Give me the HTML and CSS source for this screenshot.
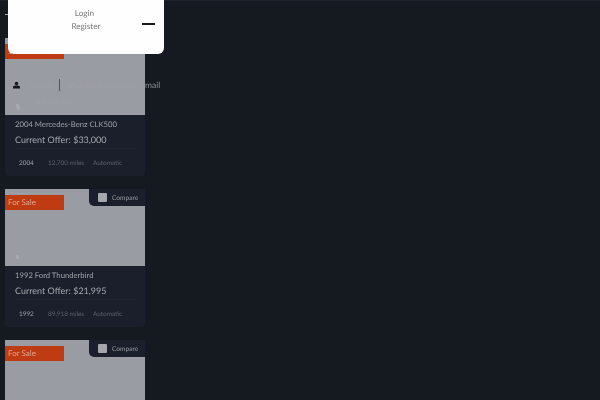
FILE: index.html
```html
<!DOCTYPE html>
<html lang="en">
<head>
<meta charset="utf-8">
<title>Listings</title>
<link rel="stylesheet" href="styles.css">
</head>
<body>
<div class="page">
  <header class="topbar"><span class="dash"></span></header>
  <main class="list">
    <article class="card">
      <div class="photo">
        <span class="badge">Sale Or...</span>
        <span class="photo-dot"></span>
      </div>
      <div class="info">
        <h2 class="title">2004 Mercedes-Benz CLK500</h2>
        <p class="price">Current Offer: $33,000</p>
        <ul class="specs"><li class="year">2004</li><li class="miles">12,700 miles</li><li class="trans">Automatic</li></ul>
      </div>
    </article>
    <article class="card">
      <div class="photo">
        <span class="badge">For Sale</span>
        <label class="compare"><span class="check"></span>Compare</label>
        <span class="photo-dot"></span>
      </div>
      <div class="info">
        <h2 class="title">1992 Ford Thunderbird</h2>
        <p class="price">Current Offer: $21,995</p>
        <ul class="specs"><li class="year">1992</li><li class="miles">89,918 miles</li><li class="trans">Automatic</li></ul>
      </div>
    </article>
    <article class="card">
      <div class="photo">
        <span class="badge">For Sale</span>
        <label class="compare"><span class="check"></span>Compare</label>
      </div>
    </article>
  </main>
  <div class="contact">
    <svg class="user" viewBox="0 0 10 10" width="7" height="8" aria-hidden="true"><circle cx="5" cy="2.7" r="2.5"/><path d="M0 10V8.2C0 6.6 1.4 5.6 3 5.6h4c1.6 0 3 1 3 2.6V10z"/></svg>
    <span class="contact-faint name">Call Us</span>
    <span class="sep"></span>
    <span class="contact-faint addr">info@dealership.com</span>
    <span class="contact-mail">mail</span>
  </div>
  <div class="contact-sub"><span class="sub-dot"></span><span>Our Location</span></div>
  <nav class="menu">
    <a class="menu-link login">Login</a>
    <a class="menu-link">Register</a>
    <span class="close"></span>
  </nav>
</div>
</body>
</html>
```
FILE: styles.css
```css
* { box-sizing: border-box; }
html, body { margin: 0; height: 100%; }
body {
  background: #151a21;
  font-family: "Lato", "Liberation Sans", sans-serif;
  text-rendering: geometricPrecision;
  overflow: hidden;
}
.page { position: relative; width: 600px; height: 400px; overflow: hidden; opacity: 0.999; }
.topbar {
  height: 38px;
  border-top: 1px solid #1d222c;
  padding: 13px 0 0 5px;
}
.dash { display: block; width: 4px; height: 1px; background: #aeb0b4; }
.list { display: flex; flex-direction: column; gap: 13px; padding-left: 5px; }
.card { width: 140px; flex: none; }
.photo { position: relative; height: 77px; background: #9a9da3; }
.badge {
  position: absolute; left: 0; top: 6px;
  width: 59px; height: 15px;
  background: #c03c12;
  color: #e0a592;
  font-size: 8px; line-height: 15px;
  padding-left: 3px;
}
.photo-dot {
  position: absolute; left: 11px; top: 66px;
  width: 3px; height: 4px; background: #a6a9ae;
}
.compare {
  position: absolute; right: 0; top: 0;
  width: 56px; height: 17px;
  background: #1b202c;
  border-bottom-left-radius: 5px;
  color: #9a9da3;
  font-size: 6.6px;
  display: flex; align-items: center; gap: 5px;
  padding-left: 9px;
}
.check { width: 9px; height: 9px; border-radius: 1px; background: #a6a8ad; flex: none; }
.info {
  height: 61px;
  background: #1b202c;
  border-radius: 0 0 4px 4px;
  padding: 4px 8px 0 10px;
}
.title { margin: 0; font-size: 7.7px; line-height: 11px; font-weight: 400; color: #a2a4aa; }
.price { margin: 2px 0 0; font-size: 9px; line-height: 15px; color: #a8aab0; padding-bottom: 1px; border-bottom: 1px solid #222733; }
.specs {
  list-style: none; margin: 0; padding: 10px 0 0 4px;
  display: flex; font-size: 6.4px; line-height: 10px;
}
.year { color: #a4a6ab; width: 29px; }
.miles { color: #5d616d; width: 45px; }
.trans { color: #5d616d; }
.contact {
  position: absolute; left: 13px; top: 79px;
  height: 12px;
  display: flex; align-items: center;
  font-size: 8px;
}
.user { fill: #14171d; flex: none; }
.contact-faint { color: #9fa2a8; }
.name { width: 39px; padding-left: 9px; }
.sep { width: 1px; height: 12px; background: #50535a; flex: none; }
.addr { width: 85px; padding-left: 6px; white-space: nowrap; overflow: hidden; }
.contact-mail { color: #8b8e94; font-size: 8.5px; }
.contact-sub {
  position: absolute; left: 17px; top: 97px;
  display: flex; align-items: flex-end; gap: 15px;
  font-size: 7px; line-height: 10px; color: #a0a3a9;
}
.sub-dot { width: 3px; height: 4px; background: #a8abb0; margin-bottom: -3px; }
.menu {
  position: absolute; left: 8px; top: 0;
  width: 156px; height: 54px;
  background: #fff;
  border-radius: 0 0 6px 6px;
  display: flex; flex-direction: column; align-items: center;
  padding: 7px 0 0 0;
  font-size: 8.2px; line-height: 13px;
}
.menu-link { color: #777879; }
.login { margin-right: 3px; }
.close {
  position: absolute; left: 134px; top: 23px;
  width: 13px; height: 2px; background: #1a1b1e;
}
```
